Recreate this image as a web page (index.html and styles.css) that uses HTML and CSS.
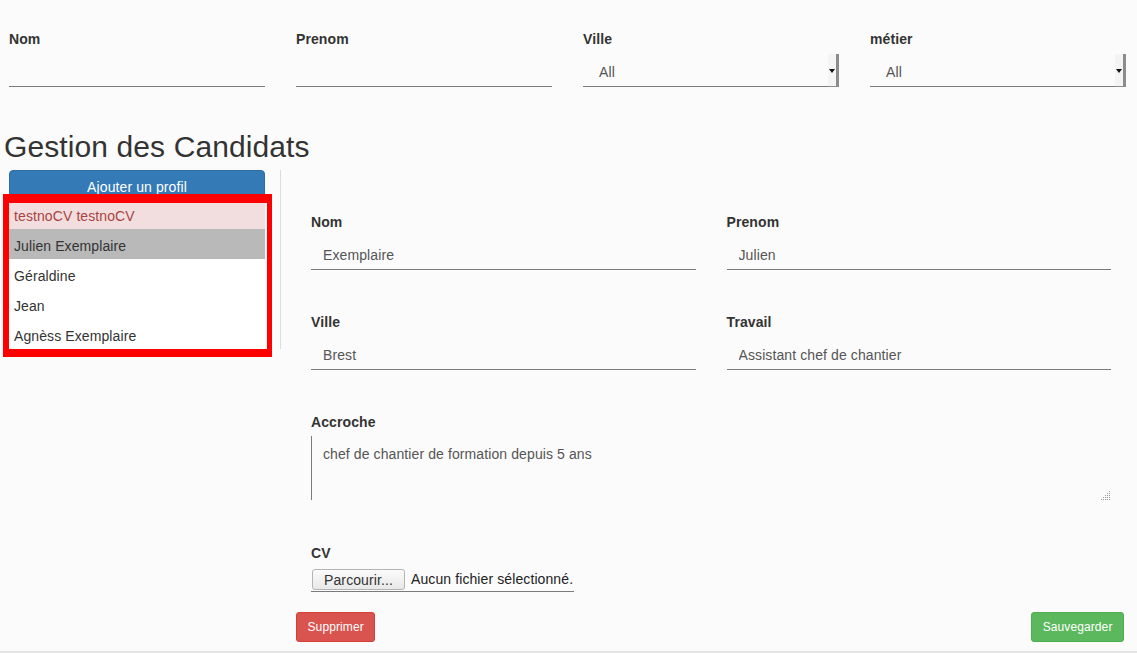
FILE: index.html
```html
<!DOCTYPE html>
<html lang="fr">
<head>
<meta charset="utf-8">
<title>Gestion des Candidats</title>
<link rel="stylesheet" href="styles.css">
</head>
<body>
<div class="page">
  <div class="filters">
    <div class="filter">
      <label class="lbl">Nom</label>
      <input class="line-input" type="text">
    </div>
    <div class="filter">
      <label class="lbl">Prenom</label>
      <input class="line-input" type="text">
    </div>
    <div class="filter">
      <label class="lbl">Ville</label>
      <div class="select"><span class="select-value">All</span><span class="select-arrow"><span class="caret"></span></span></div>
    </div>
    <div class="filter">
      <label class="lbl">métier</label>
      <div class="select"><span class="select-value">All</span><span class="select-arrow"><span class="caret"></span></span></div>
    </div>
  </div>

  <h2 class="title">Gestion des Candidats</h2>

  <div class="workspace">
    <aside class="sidebar">
      <button class="btn-add" type="button">Ajouter un profil</button>
      <ul class="candidates">
        <li class="cand cand-danger">testnoCV testnoCV</li>
        <li class="cand cand-active">Julien Exemplaire</li>
        <li class="cand">Géraldine</li>
        <li class="cand">Jean</li>
        <li class="cand">Agnèss Exemplaire</li>
      </ul>
    </aside>

    <main class="editor">
      <div class="form">
        <div class="grid">
          <div class="field">
            <label class="lbl lbl-form">Nom</label>
            <input class="form-input" type="text" value="Exemplaire">
          </div>
          <div class="field">
            <label class="lbl lbl-form">Prenom</label>
            <input class="form-input" type="text" value="Julien">
          </div>
          <div class="field">
            <label class="lbl lbl-form">Ville</label>
            <input class="form-input" type="text" value="Brest">
          </div>
          <div class="field">
            <label class="lbl lbl-form">Travail</label>
            <input class="form-input" type="text" value="Assistant chef de chantier">
          </div>
        </div>
        <div class="field-area">
          <label class="lbl lbl-form">Accroche</label>
          <div class="area-wrap">
            <textarea class="area">chef de chantier de formation depuis 5 ans</textarea>
            <svg class="grip" width="10" height="10" viewBox="0 0 10 10">
              <g fill="#9a9a9a">
                <rect x="8" y="1" width="1" height="1"/>
                <rect x="6" y="3" width="1" height="1"/><rect x="8" y="3" width="1" height="1"/>
                <rect x="4" y="5" width="1" height="1"/><rect x="6" y="5" width="1" height="1"/><rect x="8" y="5" width="1" height="1"/>
                <rect x="2" y="7" width="1" height="1"/><rect x="4" y="7" width="1" height="1"/><rect x="6" y="7" width="1" height="1"/><rect x="8" y="7" width="1" height="1"/>
                <rect x="0" y="9" width="1" height="1"/><rect x="2" y="9" width="1" height="1"/><rect x="4" y="9" width="1" height="1"/><rect x="6" y="9" width="1" height="1"/><rect x="8" y="9" width="1" height="1"/>
              </g>
            </svg>
          </div>
        </div>
        <div class="field-cv">
          <label class="lbl lbl-form">CV</label>
          <div class="file">
            <button class="file-btn" type="button">Parcourir...</button>
            <span class="file-name">Aucun fichier sélectionné.</span>
          </div>
        </div>
      </div>
      <div class="actions">
        <button class="btn btn-danger" type="button">Supprimer</button>
        <button class="btn btn-success" type="button">Sauvegarder</button>
      </div>
    </main>
  </div>

  <footer class="footer"></footer>
</div>
</body>
</html>
```

FILE: styles.css
```css
html, body {
  margin: 0;
  padding: 0;
  height: 653px;
  overflow: hidden;
  background: #fbfbfb;
}

.page {
  font-family: "Liberation Sans", Arial, sans-serif;
  font-size: 14px;
  line-height: 20px;
  letter-spacing: 0.1px;
  color: #333;
}

.page input,
.page textarea,
.page button {
  letter-spacing: 0.1px;
}

.lbl {
  display: block;
  font-weight: bold;
  font-size: 14px;
  line-height: 20px;
  height: 20px;
  color: #333;
  margin-bottom: 5px;
}

.lbl-form {
  padding-top: 1px;
  height: 19px;
}

/* Filters row */
.filters {
  display: flex;
  gap: 31px;
  padding: 29px 11px 0 9px;
}

.filter {
  flex: 0 0 256px;
}

.line-input {
  display: block;
  width: 100%;
  height: 33px;
  box-sizing: border-box;
  border: 0;
  border-bottom: 1px solid #7a7a7a;
  background: transparent;
  padding: 0 12px;
  font: 14px "Liberation Sans", Arial, sans-serif;
  color: #555;
  outline: none;
}

.select {
  display: flex;
  height: 33px;
  box-sizing: border-box;
  border-bottom: 1px solid #7a7a7a;
}

.select-value {
  flex: 1;
  padding-left: 16px;
  line-height: 36px;
  color: #555;
}

.select-arrow {
  flex: 0 0 8px;
  margin-bottom: -1px;
  background: #f4f4f4;
  border-right: 3px solid #8c8c8c;
  border-bottom: 1px solid #8c8c8c;
  display: flex;
  align-items: center;
  justify-content: center;
}

.caret {
  width: 0;
  height: 0;
  border-left: 3px solid transparent;
  border-right: 3px solid transparent;
  border-top: 4px solid #111;
  margin-top: 2px;
}

/* Title */
.title {
  margin: 43px 0 7px 4px;
  font-size: 30px;
  line-height: 33px;
  font-weight: 500;
  color: #333;
}

/* Workspace */
.workspace {
  display: flex;
  align-items: flex-start;
}

.sidebar {
  flex: 0 0 256px;
  padding: 0 15px 0 9px;
  border-right: 1px solid #dcdcdc;
}

.btn-add {
  display: block;
  width: 256px;
  height: 34px;
  margin: 0;
  padding: 0 0 1px;
  background: #337ab7;
  border: 1px solid #2e6da4;
  border-radius: 4px;
  color: #fff;
  font: 14px "Liberation Sans", Arial, sans-serif;
  cursor: pointer;
}

.candidates {
  position: relative;
  list-style: none;
  margin: -5px 0 0;
  padding: 0;
  background: #fff;
}

.candidates::after {
  content: "";
  position: absolute;
  top: -5px;
  left: -6px;
  right: -7px;
  bottom: -8px;
  border-style: solid;
  border-color: #ff0000;
  border-width: 9px 5px 8px 6px;
  pointer-events: none;
}

.cand {
  height: 30px;
  box-sizing: border-box;
  padding: 4px 5px 0;
  line-height: 26px;
  color: #333;
}

.cand-danger {
  background: #f2dede;
  color: #a94442;
}

.cand-active {
  background: #b9b9b9;
}

/* Editor */
.editor {
  flex: 1;
  padding: 41px 13px 9px 15px;
}

.form {
  padding: 0 13px 0 15px;
}

.grid {
  display: grid;
  grid-template-columns: 1fr 1fr;
  column-gap: 31px;
}

.field {
  margin-bottom: 41px;
}

.form-input {
  display: block;
  width: 100%;
  height: 34px;
  box-sizing: border-box;
  border: 0;
  border-bottom: 1px solid #7a7a7a;
  background: transparent;
  padding: 4px 12px 0;
  font: 14px "Liberation Sans", Arial, sans-serif;
  color: #555;
  outline: none;
}

.field-area {
  margin-bottom: 42px;
}

.area-wrap {
  position: relative;
}

.area {
  display: block;
  width: 100%;
  height: 64px;
  box-sizing: border-box;
  border: 0;
  border-left: 1px solid #7a7a7a;
  background: transparent;
  padding: 8px 12px 6px 11px;
  font: 14px/20px "Liberation Sans", Arial, sans-serif;
  color: #555;
  resize: none;
  outline: none;
}

.grip {
  position: absolute;
  right: 0;
  bottom: 0;
}

.field-cv {
  margin-bottom: 20px;
}

.file {
  display: inline-flex;
  align-items: center;
  gap: 6px;
  padding: 2px 1px 1px 1px;
  border-bottom: 1px solid #7a7a7a;
}

.file-btn {
  height: 21px;
  width: 93px;
  padding: 0;
  margin: 0;
  border: 1px solid #b4b4b4;
  border-radius: 3px;
  background: linear-gradient(#fbfbfb, #e8e8e8);
  font: 14px "Liberation Sans", Arial, sans-serif;
  color: #333;
}

.file-name {
  color: #222;
  line-height: 21px;
}

.actions {
  display: flex;
  justify-content: space-between;
}

.btn {
  height: 30px;
  padding: 5px 10.5px;
  border: 1px solid;
  border-radius: 3px;
  font: 12px/18px "Liberation Sans", Arial, sans-serif;
  color: #fff;
}

.btn-danger {
  background: #d9534f;
  border-color: #d43f3a;
}

.btn-success {
  background: #5cb85c;
  border-color: #4cae4c;
}

.footer {
  border-top: 2px solid #e4e4e4;
}
```
